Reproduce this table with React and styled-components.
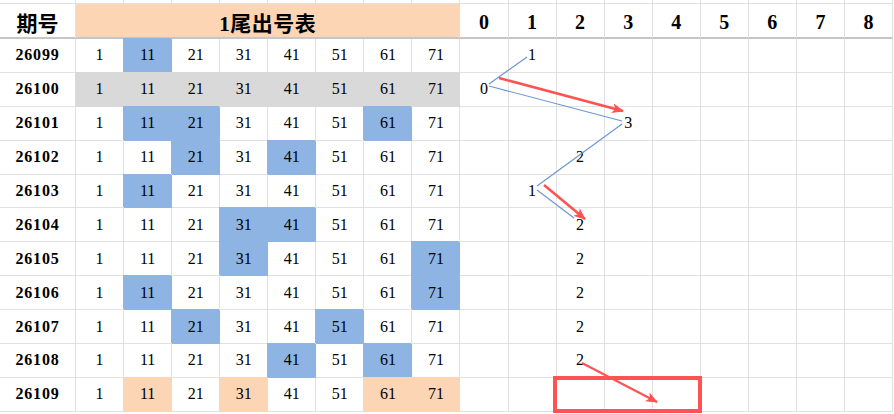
import React from "react";
import styled, { createGlobalStyle } from "styled-components";

const GRID = "#e1e1e1";
const BLUE = "#8db4e2";
const PEACH = "#fcd5b4";
const GRAY = "#d9d9d9";
const LINE_BLUE = "#6a98d4";
const RED = "#ff5252";

const VALUES = [1, 11, 21, 31, 41, 51, 61, 71];

const rows = [
  { id: "26099", blue: [11], trend: 1 },
  { id: "26100", gray: true, trend: 0 },
  { id: "26101", blue: [11, 21, 61], trend: 3 },
  { id: "26102", blue: [21, 41], trend: 2 },
  { id: "26103", blue: [11], trend: 1 },
  { id: "26104", blue: [31, 41], trend: 2 },
  { id: "26105", blue: [31, 71], trend: 2 },
  { id: "26106", blue: [11, 71], trend: 2 },
  { id: "26107", blue: [21, 51], trend: 2 },
  { id: "26108", blue: [41, 61], trend: 2 },
  { id: "26109", peach: [11, 31, 61, 71], trend: null },
];

const GlobalStyle = createGlobalStyle`
  html, body {
    margin: 0;
    padding: 0;
    background: #fff;
    overflow: hidden;
  }
`;

const Sheet = styled.div`
  position: relative;
  width: 894px;
  height: 414px;
  overflow: hidden;
  font-family: "Liberation Serif", "Noto Sans CJK SC", serif;
  color: #000;
`;

const Grid = styled.div`
  display: grid;
  width: 893px;
  grid-template-columns: 76px repeat(17, 1fr);
  grid-template-rows: 4px 35px repeat(11, 33.9px);
`;

const Cell = styled.div`
  display: flex;
  align-items: center;
  justify-content: center;
  box-sizing: border-box;
  border-right: 1px solid ${({ $fill }) => $fill || GRID};
  border-bottom: 1px solid ${({ $fill }) => $fill || GRID};
  background: ${({ $fill }) => $fill || "#fff"};
  box-shadow: ${({ $fill }) => ($fill ? `-1px -1px 0 0 ${$fill}` : "none")};
  font-size: 16px;
  white-space: nowrap;
`;

const HeadCell = styled(Cell)`
  border-bottom: 2px solid #c6c6c6;
  font-weight: bold;
  font-size: ${({ $size }) => $size || 20}px;
  padding-top: 3px;
`;

const TitleCell = styled(HeadCell)`
  grid-column: span 8;
  background: ${PEACH};
  border-right-color: ${PEACH};
  letter-spacing: 0.5px;
`;

const PeriodCell = styled(Cell)`
  font-weight: bold;
  font-size: 16px;
  letter-spacing: 0.8px;
`;

const Overlay = styled.svg`
  position: absolute;
  top: 0;
  left: 0;
  pointer-events: none;
`;

const fillFor = (row, v) => {
  if (row.gray) return GRAY;
  if (row.peach && row.peach.includes(v)) return PEACH;
  if (row.blue && row.blue.includes(v)) return BLUE;
  return null;
};

const blueLines = [
  [527, 57, 489, 84],
  [489, 86, 622, 121],
  [622, 124, 537, 186],
  [537, 190, 574, 218],
];

const redArrows = [
  [499, 78, 623, 111, 2.5],
  [544, 185, 585, 219, 2.5],
  [582, 363, 657, 402, 2],
];

const TrendOverlay = () => (
  <Overlay width="894" height="414" viewBox="0 0 894 414">
    <defs>
      <marker
        id="head"
        markerUnits="userSpaceOnUse"
        markerWidth="12"
        markerHeight="10"
        refX="11"
        refY="5"
        orient="auto"
      >
        <path d="M0 0 L12 5 L0 10 L3 5 Z" fill={RED} />
      </marker>
    </defs>
    {blueLines.map(([x1, y1, x2, y2], i) => (
      <line key={i} x1={x1} y1={y1} x2={x2} y2={y2} stroke={LINE_BLUE} strokeWidth="1.2" />
    ))}
    {redArrows.map(([x1, y1, x2, y2, w], i) => (
      <line
        key={i}
        x1={x1}
        y1={y1}
        x2={x2}
        y2={y2}
        stroke={RED}
        strokeWidth={w}
        markerEnd="url(#head)"
      />
    ))}
    <rect x="555" y="378" width="145" height="33" fill="none" stroke={RED} strokeWidth="4" />
  </Overlay>
);

export default function App() {
  return (
    <>
      <GlobalStyle />
      <Sheet>
        <Grid>
          {Array.from({ length: 18 }, (_, i) => (
            <Cell key={`top-${i}`} />
          ))}

          <HeadCell $size={21}>期号</HeadCell>
          <TitleCell $size={21}>1尾出号表</TitleCell>
          {Array.from({ length: 9 }, (_, i) => (
            <HeadCell key={`h-${i}`}>{i}</HeadCell>
          ))}

          {rows.map((row) => (
            <React.Fragment key={row.id}>
              <PeriodCell>{row.id}</PeriodCell>
              {VALUES.map((v) => (
                <Cell key={v} $fill={fillFor(row, v)}>
                  {v}
                </Cell>
              ))}
              {Array.from({ length: 9 }, (_, i) => (
                <Cell key={`t-${i}`}>{row.trend === i ? i : ""}</Cell>
              ))}
            </React.Fragment>
          ))}
        </Grid>
        <TrendOverlay />
      </Sheet>
    </>
  );
}
